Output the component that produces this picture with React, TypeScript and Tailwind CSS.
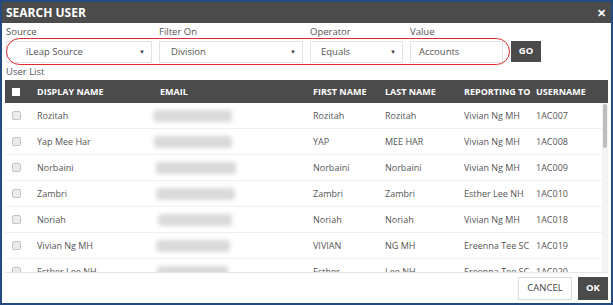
import React from 'react';

const rows = [
  { name: 'Rozitah', first: 'Rozitah', last: 'Rozitah', rep: 'Vivian Ng MH', user: '1AC007', blur: 'ml-[-7px] w-[79px]' },
  { name: 'Yap Mee Har', first: 'YAP', last: 'MEE HAR', rep: 'Vivian Ng MH', user: '1AC008', blur: 'ml-[-6px] w-[78px]' },
  { name: 'Norbaini', first: 'Norbaini', last: 'Norbaini', rep: 'Vivian Ng MH', user: '1AC009', blur: 'ml-[-4px] w-[80px]' },
  { name: 'Zambri', first: 'Zambri', last: 'Zambri', rep: 'Esther Lee NH', user: '1AC010', blur: 'ml-[-4px] w-[79px]' },
  { name: 'Noriah', first: 'Noriah', last: 'Noriah', rep: 'Vivian Ng MH', user: '1AC018', blur: 'ml-[-2px] w-[74px]' },
  { name: 'Vivian Ng MH', first: 'VIVIAN', last: 'NG MH', rep: 'Ereenna Tee SC', user: '1AC019', blur: 'ml-[-4px] w-[74px]' },
  { name: 'Esther Lee NH', first: 'Esther', last: 'Lee NH', rep: 'Ereenna Tee SC', user: '1AC020', blur: 'ml-[-3px] w-[71px]' },
];

const cols = 'grid grid-cols-[32px_123px_153px_72px_79px_72px_1fr] items-center whitespace-nowrap';

function Select({ label, value, width, pad }: { label: string; value: string; width: string; pad: string }) {
  return (
    <div className={`flex flex-col ${width}`}>
      <span className="h-[13px] text-[9.5px] leading-[12px] text-[#555]">{label}</span>
      <div className={`mt-[2px] h-[22px] border border-[#e2e2e2] flex items-center justify-between ${pad} pr-[6px] text-[9.5px] text-[#555]`}>
        <span>{value}</span>
        <span className="text-[6px] text-[#444]">▼</span>
      </div>
    </div>
  );
}

export default function App() {
  return (
    <div className="w-[613px] h-[305px] border-2 border-[#234b82] bg-white flex flex-col overflow-hidden" style={{ fontFamily: '"Open Sans", "Noto Sans", sans-serif' }}>
      {/* Title bar */}
      <div className="h-[21px] shrink-0 bg-[#4b4b4b] flex items-center justify-between pl-[4px] pr-[5px]">
        <span className="text-white font-bold text-[12px] leading-none">SEARCH USER</span>
        <span className="text-white font-bold text-[11px] leading-none">✕</span>
      </div>

      {/* Filters */}
      <div className="relative px-[4px] pt-[3px] flex items-end gap-[7px]">
        <Select label="Source" value="iLeap Source" width="w-[146px]" pad="pl-[19px]" />
        <Select label="Filter On" value="Division" width="w-[144px]" pad="pl-[11px]" />
        <Select label="Operator" value="Equals" width="w-[93px]" pad="pl-[10px]" />
        <div className="flex flex-col w-[93px]">
          <span className="h-[13px] text-[9.5px] leading-[12px] text-[#555]">Value</span>
          <div className="mt-[2px] h-[22px] border border-[#e2e2e2] flex items-center pl-[8px] text-[9.5px] text-[#555]">Accounts</div>
        </div>
        <button className="ml-[1px] h-[21px] w-[30px] bg-[#4b4b4b] text-white text-[9.5px] font-bold mb-[1px]">GO</button>
        <div className="absolute left-[4px] top-[15px] w-[504px] h-[27px] rounded-[14px] border-[1.5px] border-[#e0282e] pointer-events-none" />
      </div>

      {/* User list */}
      <div className="px-[4px] mt-[2px] h-[14px] text-[9.5px] leading-[14px] text-[#555]">User List</div>

      <div className="mx-[3px] mt-[1px] flex flex-col">
        <div className={`${cols} h-[23px] bg-[#4b4b4b] text-white text-[9px] font-bold pr-[6px]`}>
          <div className="pl-[7px]"><div className="w-[8px] h-[8px] bg-white" /></div>
          <span>DISPLAY NAME</span>
          <span>EMAIL</span>
          <span>FIRST NAME</span>
          <span>LAST NAME</span>
          <span>REPORTING TO</span>
          <span>USERNAME</span>
        </div>
        <div className="relative h-[170px] overflow-hidden border-b border-[#e6e6e6]">
          {rows.map((r) => (
            <div key={r.user} className={`${cols} h-[26px] border-b border-[#efefef] text-[9px] text-[#555] pr-[6px]`}>
              <div className="pl-[7px]"><div className="w-[9px] h-[9px] rounded-[2px] border border-[#c4c4c4] bg-[#ececec]" /></div>
              <span>{r.name}</span>
              <div className={`${r.blur} h-[12px] bg-[#dadada] blur-[2px] rounded-sm`} />
              <span>{r.first}</span>
              <span>{r.last}</span>
              <span>{r.rep}</span>
              <span>{r.user}</span>
            </div>
          ))}
          <div className="absolute right-0 top-0 bottom-0 w-[6px] bg-[#f3f3f3]">
            <div className="mx-auto mt-[1px] w-[4px] h-[44px] rounded-full bg-[#bdbdbd]" />
          </div>
        </div>
      </div>

      {/* Footer */}
      <div className="flex justify-end gap-[6px] pr-[3px] mt-[4px]">
        <button className="h-[23px] w-[54px] border border-[#dcdcdc] bg-white text-[9.5px] text-[#444]">CANCEL</button>
        <button className="h-[23px] w-[30px] bg-[#4b4b4b] text-white text-[9.5px] font-bold">OK</button>
      </div>
    </div>
  );
}
